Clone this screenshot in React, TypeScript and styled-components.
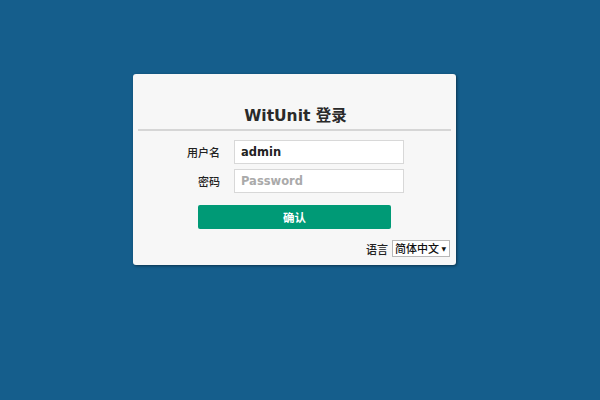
import React from "react";
import styled, { createGlobalStyle } from "styled-components";

const Global = createGlobalStyle`
  html, body { margin: 0; padding: 0; }
  body {
    background: #155e8c;
    width: 600px;
    height: 400px;
    font-family: "DejaVu Sans", "Noto Sans CJK SC", sans-serif;
  }
`;

const Page = styled.div`
  width: 600px;
  height: 400px;
  display: flex;
  justify-content: center;
  padding-top: 74px;
  box-sizing: border-box;
`;

const Card = styled.div`
  width: 323px;
  height: 191px;
  margin-left: -11px;
  background: #f7f7f7;
  border-radius: 3px;
  box-shadow: 1px 1px 3px rgba(0, 0, 0, 0.45);
  box-sizing: border-box;
  padding: 31px 5px 0;
  display: flex;
  flex-direction: column;
`;

const Title = styled.h1`
  margin: 0;
  font-size: 15.5px;
  font-weight: bold;
  color: #2a2a2a;
  text-align: center;
  line-height: 22px;
  padding-bottom: 2px;
  padding-left: 2px;
  border-bottom: 2px solid #d6d6d6;
`;

const Form = styled.div`
  display: grid;
  grid-template-columns: 82px 170px;
  column-gap: 14px;
  row-gap: 5px;
  margin-top: 9px;
`;

const Label = styled.label`
  text-align: right;
  font-size: 11px;
  font-weight: 500;
  color: #222;
  line-height: 24px;
  font-family: "Noto Sans CJK SC", sans-serif;
`;

const Input = styled.input`
  box-sizing: border-box;
  width: 170px;
  height: 24px;
  border: 1px solid #d8d8d8;
  background: #fff;
  padding: 0 6px;
  font-family: "DejaVu Sans", sans-serif;
  font-size: 11.5px;
  font-weight: bold;
  color: #222;
  outline: none;
  &::placeholder { color: #aaaaaa; font-weight: bold; }
`;

const Button = styled.button`
  align-self: flex-start;
  margin: 12px 0 0 60px;
  width: 193px;
  height: 24px;
  border: none;
  border-radius: 2px;
  background: #009a76;
  color: #fff;
  font-family: "Noto Sans CJK SC", sans-serif;
  font-weight: bold;
  font-size: 11.5px;
  padding: 0;
`;

const LangRow = styled.div`
  display: flex;
  justify-content: flex-end;
  align-items: center;
  gap: 4px;
  margin-top: 11px;
  margin-right: 1px;
  font-size: 11px;
  font-weight: 500;
  font-family: "Noto Sans CJK SC", sans-serif;
  color: #222;
  white-space: nowrap;
`;

const Select = styled.div`
  box-sizing: border-box;
  width: 58px;
  height: 17px;
  border: 1px solid #b8b8b8;
  background: #fff;
  display: flex;
  align-items: center;
  justify-content: space-between;
  padding: 0 3px 0 2px;
  font-size: 11px;
  line-height: 15px;
  color: #111;
`;

const Arrow = styled.span`
  font-size: 6px;
  color: #111;
  font-family: "DejaVu Sans", sans-serif;
`;

export default function App() {
  return (
    <>
      <Global />
      <Page>
        <Card>
          <Title>WitUnit 登录</Title>
          <Form>
            <Label>用户名</Label>
            <Input defaultValue="admin" />
            <Label>密码</Label>
            <Input type="password" placeholder="Password" />
          </Form>
          <Button>确认</Button>
          <LangRow>
            <span>语言</span>
            <Select>
              <span>简体中文</span>
              <Arrow>▼</Arrow>
            </Select>
          </LangRow>
        </Card>
      </Page>
    </>
  );
}
